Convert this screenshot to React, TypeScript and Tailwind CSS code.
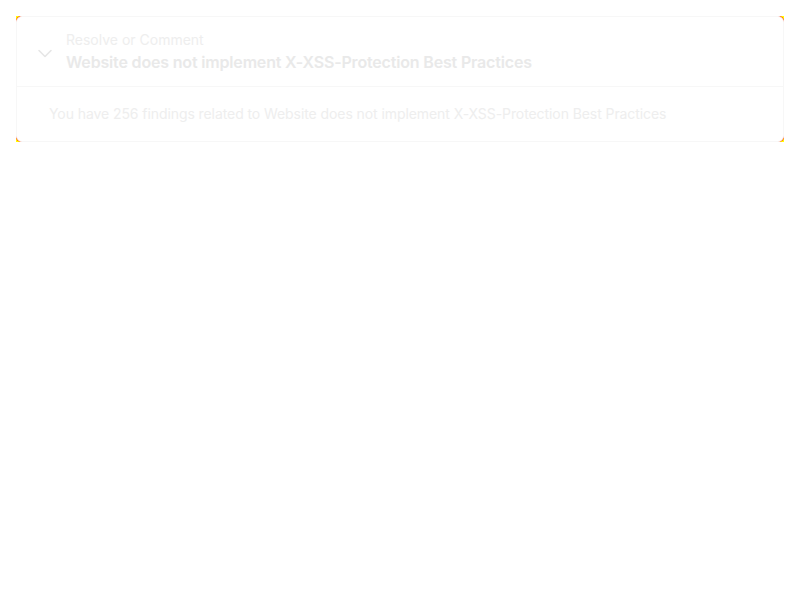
import React from 'react';

/**
 * 漏洞发现卡片（折叠面板的展开状态）
 */
function ChevronDown() {
  return (
    <svg width="16" height="16" viewBox="0 0 16 16" fill="none" stroke="currentColor" strokeWidth="1.6" strokeLinecap="round" strokeLinejoin="round">
      <path d="M2 5.5l6 6 6-6" />
    </svg>
  );
}

export default function App() {
  return (
    <div className="min-h-screen w-full bg-white p-4" style={{ fontFamily: 'Inter, "Liberation Sans", sans-serif' }}>
      {/* 外层底色，只在圆角处露出 */}
      <div className="bg-[#ffff00]">
        <div className="rounded-[5px] bg-[#ff2000]">
          <div className="rounded-[6px] border border-[#f7f7f7] bg-white">
            {/* 标题行 */}
            <div className="flex items-center gap-[13px] border-b border-[#f7f7f7] px-[20px] pt-[13px] pb-[12px]">
              <span className="pt-[2px] text-[#e6e6e6]">
                <ChevronDown />
              </span>
              <div className="flex flex-col">
                <span className="text-[14px] leading-5 text-[#eeeeee]">Resolve or Comment</span>
                <span className="text-[16px] font-semibold leading-6 tracking-[-0.17px] text-[#e9e9e9]">
                  Website does not implement X-XSS-Protection Best Practices
                </span>
              </div>
            </div>

            {/* 内容 */}
            <div className="px-[32px] py-[17px] text-[14px] leading-5 tracking-[-0.08px] text-[#eeeeee]">
              You have 256 findings related to Website does not implement X-XSS-Protection Best Practices
            </div>
          </div>
        </div>
      </div>
    </div>
  );
}
